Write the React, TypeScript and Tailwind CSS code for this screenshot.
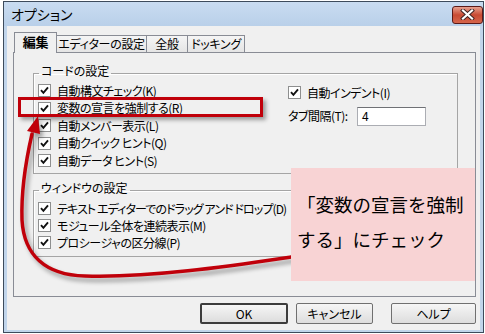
import React from "react"

const Check: React.FC = () => (
  <span className="flex h-[13px] w-[13px] shrink-0 items-center justify-center border border-[#8e8f8f] bg-white">
    <svg width="9" height="9" viewBox="0 0 9 9">
      <path d="M1 4.2 L3.4 6.8 L8 1.4" fill="none" stroke="#111" strokeWidth="1.9" />
    </svg>
  </span>
)

const Row: React.FC<{ label: string; h?: string; tight?: boolean }> = ({ label, h = "h-[17.5px]", tight }) => (
  <div className={`flex items-center gap-[6px] pl-[4px] ${h}`}>
    <Check />
    <span className={`whitespace-nowrap text-[12px] leading-none ${tight ? "tracking-[-0.9px]" : "tracking-[-0.5px]"}`}>
      {label}
    </span>
  </div>
)

const Btn: React.FC<{ label: string; w: string; def?: boolean; className?: string }> = ({ label, w, def, className = "" }) => (
  <button
    className={`flex h-[21px] items-center justify-center rounded-[2px] bg-gradient-to-b from-[#f6f6f6] to-[#dddddd] text-[12px] ${w} ${
      def ? "border-2 border-[#3c3c3c]" : "border border-[#707070]"
    } ${className}`}
  >
    {label}
  </button>
)

export default function App() {
  return (
    <div className="relative h-[334px] w-[485px] overflow-hidden bg-white font-['Noto_Sans_CJK_JP',sans-serif] text-black [font-feature-settings:'palt']">
      {/* window */}
      <div className="ml-[3px] mt-[1px] flex h-[332px] w-[481px] flex-col border border-[#3d4b5c] bg-[#c1d5eb]">
        <div className="flex h-[24px] items-center bg-gradient-to-b from-[#c9dcf1] to-[#b9d0e9] pl-[7px]">
          <span className="text-[14px] leading-none">オプション</span>
          <div className="ml-auto mt-[1px] flex h-[18px] w-[31px] items-center justify-center rounded-[3px] border border-[#5a1a18] bg-gradient-to-b from-[#e6a08f] via-[#c84a33] to-[#d6654b]">
            <svg width="15" height="11" viewBox="0 0 15 11">
              <path d="M3 1.5 L12 9.5 M12 1.5 L3 9.5" stroke="#3a2020" strokeWidth="4" strokeLinecap="square" />
              <path d="M3 1.5 L12 9.5 M12 1.5 L3 9.5" stroke="#fff" strokeWidth="2.2" strokeLinecap="square" />
            </svg>
          </div>
        </div>

        {/* client */}
        <div className="mx-[3px] mb-[2px] flex flex-1 flex-col bg-[#f0f0f0]">
          {/* tabs */}
          <div className="relative z-10 flex h-[27px] items-end whitespace-nowrap pl-[7px] text-[12px] tracking-[-0.3px]">
            <div className="flex h-[21px] w-[43px] items-center justify-center border border-b-0 border-[#898c95] bg-[#f0f0f0] pb-[2px] text-[13px] font-bold">
              編集
            </div>
            <div className="mb-[1px] flex h-[17px] w-[90px] items-center justify-center border-r border-t border-[#898c95] bg-gradient-to-b from-[#f5f5f5] to-[#e5e5e5]">
              エディターの設定
            </div>
            <div className="mb-[1px] flex h-[17px] w-[41px] items-center justify-center border-r border-t border-[#898c95] bg-gradient-to-b from-[#f5f5f5] to-[#e5e5e5]">
              全般
            </div>
            <div className="mb-[1px] flex h-[17px] w-[57px] items-center justify-center border-r border-t border-[#898c95] bg-gradient-to-b from-[#f5f5f5] to-[#e5e5e5]">
              ドッキング
            </div>
          </div>

          {/* panel */}
          <div className="-mt-[1px] ml-[6px] mr-[4px] flex h-[245px] flex-col border border-[#898c95]">
            <fieldset className="ml-[19px] mt-[12px] h-[109px] w-[425px] border border-[#a5a5a5] px-0 pb-0 pt-0 shadow-[inset_1px_1px_0_#fff]">
              <legend className="ml-[5px] px-[2px] pb-[4px] text-[12px] leading-[12px]">コードの設定</legend>
              <div className="flex">
                <div className="w-[250px] pt-[1px]">
                  <Row label="自動構文チェック(K)" />
                  <Row label="変数の宣言を強制する(R)" />
                  <Row label="自動メンバー表示(L)" />
                  <Row label="自動クイック ヒント(Q)" />
                  <Row label="自動データ ヒント(S)" />
                </div>
                <div className="pl-[4px] pt-[3px]">
                  <div className="flex h-[17.5px] items-center gap-[6px]">
                    <Check />
                    <span className="text-[12px] leading-none tracking-[-0.5px]">自動インデント(I)</span>
                  </div>
                  <div className="mt-[5px] flex h-[19px] items-center">
                    <span className="w-[69px] text-[12px] leading-none tracking-[-0.5px]">タブ間隔(T):</span>
                    <div className="flex h-[19px] w-[69px] items-center border border-[#abadb3] border-t-[#6f7175] bg-white pl-[4px] text-[12px]">
                      4
                    </div>
                  </div>
                </div>
              </div>
            </fieldset>

            <fieldset className="ml-[19px] mt-[8px] h-[75px] w-[425px] border border-[#a5a5a5] px-0 pb-0 pt-[2px] shadow-[inset_1px_1px_0_#fff]">
              <legend className="ml-[5px] px-[2px] pb-[4px] text-[12px] leading-[12px]">ウィンドウの設定</legend>
              <Row h="h-[17px]" tight label="テキスト エディターでのドラッグ アンド ドロップ(D)" />
              <Row h="h-[17px]" label="モジュール全体を連続表示(M)" />
              <Row h="h-[17px]" label="プロシージャの区分線(P)" />
            </fieldset>
          </div>

          {/* buttons */}
          <div className="mt-[6px] flex">
            <Btn label="OK" w="w-[88px]" def className="ml-[193px]" />
            <Btn label="キャンセル" w="w-[77px]" className="ml-[8px]" />
            <Btn label="ヘルプ" w="w-[85px]" className="ml-[18px]" />
          </div>
        </div>
      </div>

      {/* annotations */}
      <div className="absolute left-[18px] top-[97px] h-[20px] w-[245px] border-[3px] border-[#c0000a] shadow-[3px_3px_4px_rgba(0,0,0,0.35)]" />

      <svg
        className="absolute left-0 top-0 drop-shadow-[3px_4px_2px_rgba(0,0,0,0.35)]"
        width="485"
        height="334"
        viewBox="0 0 485 334"
      >
        <path
          d="M300 256 L291 257 C230 266 150 278 85 276 C45 275 24 255 22 220 C21 190 26 160 32 134"
          fill="none"
          stroke="#c0000a"
          strokeWidth="3.5"
          strokeLinecap="round"
        />
        <path d="M38 116 L27 131 L40 134 Z" fill="#c0000a" />
      </svg>

      <div className="absolute left-[291px] top-[168px] h-[113px] w-[184px] bg-[#f8d3d4] pl-[6px] pt-[19px] text-[18.5px] leading-[35px] [font-feature-settings:normal]">
        <div className="whitespace-nowrap">「変数の宣言を強制</div>
        <div className="whitespace-nowrap">する」にチェック</div>
      </div>
    </div>
  )
}
